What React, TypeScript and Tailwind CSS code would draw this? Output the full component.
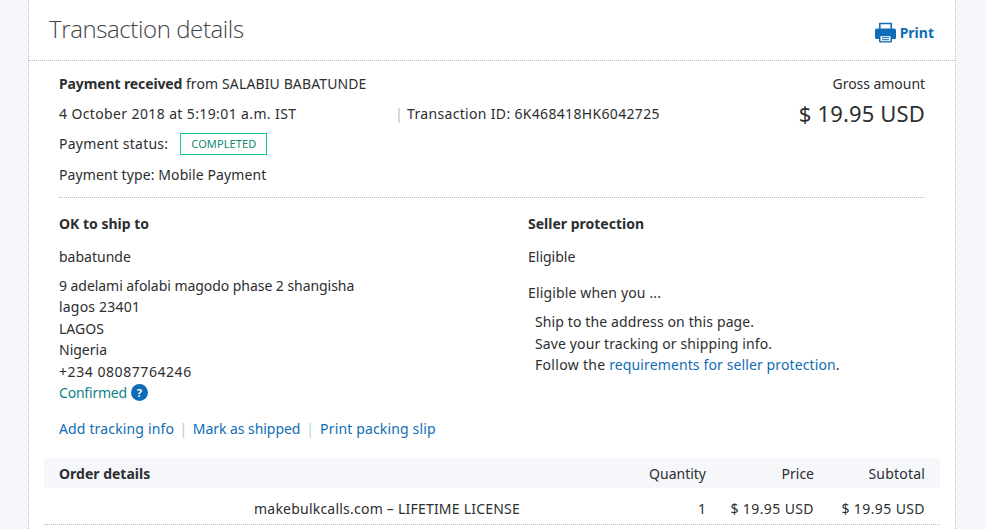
import React from "react";

const Row = ({ label, q, p, s, numeric }: { label: React.ReactNode; q: string; p: string; s: string; numeric?: boolean }) => (
  <div className="flex items-center">
    <div className="flex-1">{label}</div>
    <div className="w-[60px] text-right">{q}</div>
    <div className={numeric ? "w-[108px] text-right tracking-[0.4px]" : "w-[108px] text-right"}>{p}</div>
    <div className={numeric ? "w-[111px] text-right tracking-[0.4px]" : "w-[111px] text-right tracking-[0.2px]"}>{s}</div>
  </div>
);

export default function App() {
  return (
    <div className="w-[986px] h-[529px] overflow-hidden bg-[#f5f7fa] text-[14px] text-[#2c2e2f] font-['Noto_Sans',sans-serif]">
      <div className="ml-[28px] w-[928px] h-[529px] bg-white border-x border-dotted border-[#bbbbbb]">
        <div className="h-[61px] flex items-start justify-between border-b border-dotted border-[#bbbbbb] pl-[20px] pr-[21px]">
          <h1 className="mt-[13px] text-[24px] leading-[32px] font-light tracking-[-0.4px] text-[#3f4446] font-['Open_Sans',sans-serif]">Transaction details</h1>
          <div className="mt-[22px] flex items-center gap-[4px] text-[#0f6db5] font-bold">
            <svg width="21" height="21" viewBox="0 0 21 21" aria-hidden="true">
              <path d="M4 7V1.500A.8.8 0 0 1 4.800.700h11.400a.8.8 0 0 1 .8.8V7h-1.600V2.300H5.600V7z" fill="#0f6db5" />
              <path d="M2 6.500h17a2 2 0 0 1 2 2v7a1.500 1.500 0 0 1-1.500 1.500H17v-4H4v4H1.500A1.500 1.500 0 0 1 0 15.500v-7a2 2 0 0 1 2-2z" fill="#0f6db5" />
              <path d="M4 13h13v6.500a1 1 0 0 1-1 1H5a1 1 0 0 1-1-1z" fill="#0f6db5" />
              <path d="M5.500 14.200h10v5h-10z" fill="#ffffff" />
              <path d="M7 15.700h7M7 17.700h7" stroke="#0f6db5" strokeWidth="1" />
            </svg>
            <span>Print</span>
          </div>
        </div>

        <div className="pl-[30px] pr-[30px]">
          <div className="flex justify-between border-b border-dotted border-[#bbbbbb] h-[137px]">
            <div className="w-[660px]">
              <div className="mt-[12px] leading-[22px]">
                <span className="font-bold tracking-[-0.12px]">Payment received</span> <span className="tracking-[0.12px]">from SALABIU BABATUNDE</span>
              </div>
              <div className="mt-[8px] flex leading-[22px] whitespace-nowrap">
                <span className="w-[336px] tracking-[0.38px]">4 October 2018 at 5:19:01 a.m. IST</span>
                <span className="text-[#b7bcbf] w-[12px]">|</span>
                <span className="tracking-[0.33px]">Transaction ID: 6K468418HK6042725</span>
              </div>
              <div className="mt-[8px] flex items-center leading-[22px]">
                <span className="tracking-[0.25px]">Payment status:</span>
                <span className="ml-[12px] h-[22px] w-[87px] flex items-center justify-center border border-[#1fc796] text-[11px] tracking-[0.1px] text-[#0e8a70]">COMPLETED</span>
              </div>
              <div className="mt-[9px] leading-[22px] tracking-[0.1px]">Payment type: Mobile Payment</div>
            </div>
            <div className="text-right">
              <div className="mt-[12px] leading-[22px] tracking-[-0.05px]">Gross amount</div>
              <div className="mt-[3px] text-[22px] leading-[30px] tracking-[0.15px]">$ 19.95 USD</div>
            </div>
          </div>

          <div className="flex h-[260px]">
            <div className="w-[469px]">
              <div className="mt-[15px] font-bold leading-[22px]">OK to ship to</div>
              <div className="mt-[11px] leading-[22px]">babatunde</div>
              <div className="mt-[6.5px] leading-[21.500px]">
                <div className="tracking-[-0.05px]">9 adelami afolabi magodo phase 2 shangisha</div>
                <div className="tracking-[0.2px]">lagos 23401</div>
                <div>LAGOS</div>
                <div>Nigeria</div>
                <div className="tracking-[0.56px]">+234 08087764246</div>
              </div>
              <div className="flex items-center gap-[4px] leading-[21px] text-[#0e7f8a]">
                <span className="tracking-[-0.2px]">Confirmed</span>
                <span className="w-[17px] h-[17px] rounded-full bg-[#0f6db5] text-white text-[11px] font-bold flex items-center justify-center">?</span>
              </div>
              <div className="mt-[15px] flex leading-[22px] text-[#0f6db5]">
                <span className="tracking-[0.15px]">Add tracking info</span>
                <span className="mx-[5.5px] text-[#c9c4c0]">|</span>
                <span className="tracking-[-0.05px]">Mark as shipped</span>
                <span className="mx-[6px] text-[#b5d3ea]">|</span>
                <span className="tracking-[0.15px]">Print packing slip</span>
              </div>
            </div>
            <div>
              <div className="mt-[15px] font-bold leading-[22px]">Seller protection</div>
              <div className="mt-[11px] leading-[22px]">Eligible</div>
              <div className="mt-[14px] leading-[22px] tracking-[0.15px]">Eligible when you ...</div>
              <div className="mt-[7px] ml-[7px] leading-[21.500px] tracking-[0.12px]">
                <div>Ship to the address on this page.</div>
                <div>Save your tracking or shipping info.</div>
                <div>
                  <span className="tracking-[0.3px]">Follow the</span> <span className="text-[#0f6db5]">requirements for seller protection</span>.
                </div>
              </div>
            </div>
          </div>
        </div>

        <div className="mx-[15px] h-[30px] bg-[#f5f7fa] px-[15px] flex flex-col justify-center">
          <Row label={<span className="font-bold">Order details</span>} q="Quantity" p="Price" s="Subtotal" />
        </div>
        <div className="mx-[15px] h-[37px] px-[15px] pt-[10px] border-b border-dotted border-[#bbbbbb]">
          <Row label={<span className="pl-[195px] tracking-[0.22px]">makebulkcalls.com – LIFETIME LICENSE</span>} q="1" p="$ 19.95 USD" s="$ 19.95 USD" numeric />
        </div>
      </div>
    </div>
  );
}
